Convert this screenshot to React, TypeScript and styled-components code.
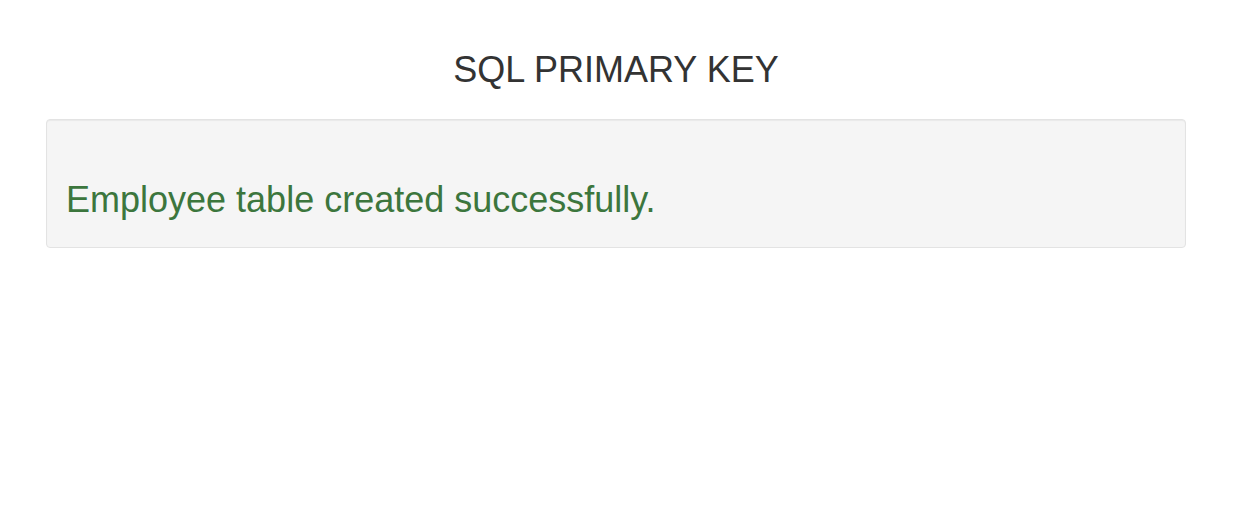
import React from "react"
import styled, { createGlobalStyle } from "styled-components"

const GlobalStyle = createGlobalStyle`
  html, body {
    margin: 0;
    padding: 0;
    background: #fff;
  }
  body {
    font-family: "Liberation Sans", Arial, Helvetica, sans-serif;
    color: #333;
  }
`

const Page = styled.div`
  width: 1140px;
  margin-left: 46px;
  display: flex;
  flex-direction: column;
`

const Title = styled.h2`
  margin: 50px 0 29px;
  font-size: 36px;
  font-weight: 400;
  line-height: 1.1;
  text-align: center;
  color: #333;
`

const Well = styled.div`
  min-height: 20px;
  padding: 19px;
  background-color: #f5f5f5;
  border: 1px solid #e3e3e3;
  border-radius: 4px;
  box-shadow: inset 0 1px 1px rgba(0, 0, 0, 0.05);
`

const Message = styled.p<{ $tone?: "success" | "danger" }>`
  margin: 41px 0 9px 0;
  font-size: 36px;
  line-height: 1.1;
  color: ${({ $tone }) => ($tone === "danger" ? "#a94442" : "#3c763d")};
`

export default function App() {
  return (
    <>
      <GlobalStyle />
      <Page>
        <Title>SQL PRIMARY KEY</Title>
        <Well>
          <Message $tone="success">Employee table created successfully.</Message>
        </Well>
      </Page>
    </>
  )
}
